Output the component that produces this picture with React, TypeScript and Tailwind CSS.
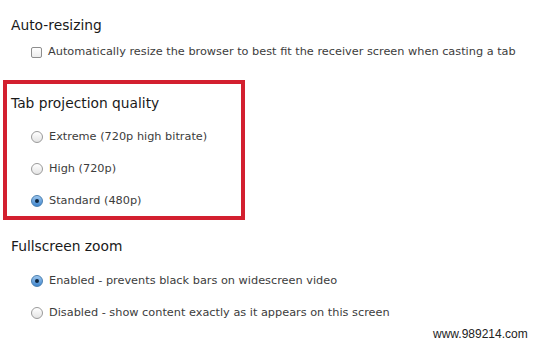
import React from "react";

const font = { fontFamily: '"DejaVu Sans", "Liberation Sans", sans-serif' };

function Radio({ checked }: { checked?: boolean }) {
  if (checked) {
    return (
      <span className="relative inline-flex h-[12px] w-[12px] shrink-0 items-center justify-center rounded-full border border-[#4a7fb0] bg-gradient-to-b from-[#9cc6ee] to-[#3f87cf]">
        <span className="h-[4px] w-[4px] rounded-full bg-[#0f2740]" />
      </span>
    );
  }
  return (
    <span className="inline-block h-[12px] w-[12px] shrink-0 rounded-full border border-[#9a9a9a] bg-gradient-to-b from-[#ffffff] to-[#e4e4e4]" />
  );
}

function Row({ children, checked }: { children: React.ReactNode; checked?: boolean }) {
  return (
    <div className="flex h-[16px] items-center gap-[6px] pl-[20px]">
      <Radio checked={checked} />
      <span className="text-[11.3px] leading-[16px] text-[#3c3c3c]">{children}</span>
    </div>
  );
}

export default function App() {
  return (
    <div className="relative h-[341px] w-[539px] overflow-hidden bg-white" style={font}>
      <div className="pl-[3px] pt-[16px]">
        <div className="pl-[8px] text-[13.8px] leading-[18px] text-[#1a1a1a]">Auto-resizing</div>
        <div className="mt-[10px] flex h-[16px] items-center gap-[6px] pl-[28px]">
          <span className="inline-block h-[11px] w-[11px] shrink-0 rounded-[2px] border border-[#8e8e8e] bg-gradient-to-b from-[#ffffff] to-[#ececec]" />
          <span className="whitespace-nowrap text-[11.3px] leading-[16px] text-[#3c3c3c]">
            Automatically resize the browser to best fit the receiver screen when casting a tab
          </span>
        </div>

        <div className="mt-[20px] h-[140px] w-[242px] border-[4px] border-[#d3202f] pl-[4px] pt-[10px]">
          <div className="text-[13.8px] leading-[18px] text-[#1a1a1a]">Tab projection quality</div>
          <div className="mt-[17px] flex flex-col gap-[16px]">
            <Row>Extreme (720p high bitrate)</Row>
            <Row>High (720p)</Row>
            <Row checked>Standard (480p)</Row>
          </div>
        </div>

        <div className="mt-[17px] pl-[8px] text-[13.8px] leading-[18px] text-[#1a1a1a]">Fullscreen zoom</div>
        <div className="mt-[18px] flex flex-col gap-[15.5px] pl-[8px]">
          <Row checked>Enabled - prevents black bars on widescreen video</Row>
          <Row>Disabled - show content exactly as it appears on this screen</Row>
        </div>
      </div>
      <div
        className="absolute left-[433px] top-[326px] text-[12px] leading-[16px] text-[#222]"
        style={{ fontFamily: '"Liberation Sans", Arial, sans-serif' }}
      >
        www.989214.com
      </div>
    </div>
  );
}
